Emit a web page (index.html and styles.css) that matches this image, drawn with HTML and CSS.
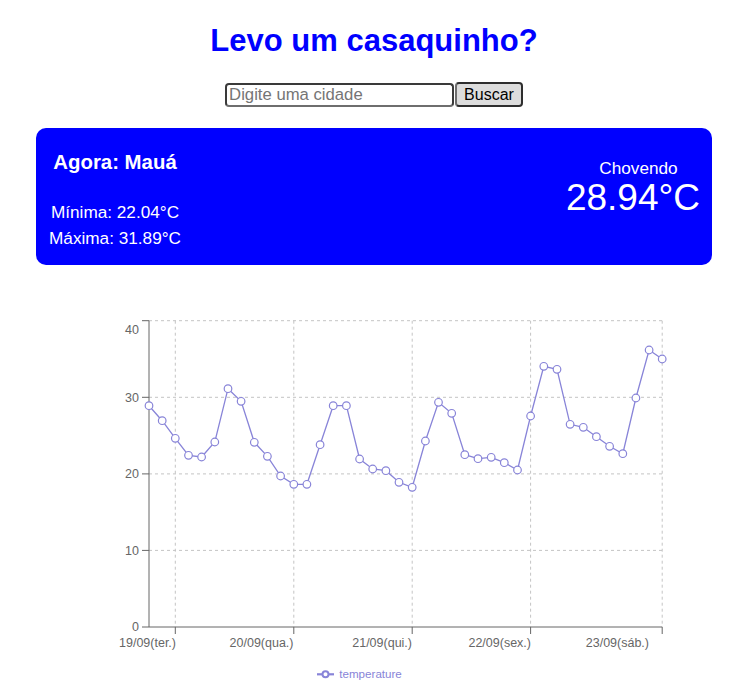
FILE: index.html
```html
<!DOCTYPE html>
<html lang="pt-BR">
<head>
<meta charset="utf-8">
<title>Levo um casaquinho?</title>
<link rel="stylesheet" href="styles.css">
</head>
<body>
<h1 class="title">Levo um casaquinho?</h1>
<form class="search">
  <input class="search-input" type="text" placeholder="Digite uma cidade"><button class="search-btn" type="button">Buscar</button>
</form>
<section class="card">
  <div class="card-left">
    <h3 class="city">Agora: Mauá</h3>
    <p class="minmax">Mínima: 22.04°C</p>
    <p class="minmax">Máxima: 31.89°C</p>
  </div>
  <div class="card-right">
    <p class="cond">Chovendo</p>
    <p class="temp">28.94°C</p>
  </div>
</section>
<svg class="chart" width="750" height="405" viewBox="0 290 750 405" xmlns="http://www.w3.org/2000/svg">
  <g class="grid" stroke="#c4c4c4" stroke-dasharray="3 3" fill="none">
    <line x1="149" y1="320.7" x2="662.2" y2="320.7"/>
    <line x1="149" y1="397.3" x2="662.2" y2="397.3"/>
    <line x1="149" y1="473.9" x2="662.2" y2="473.9"/>
    <line x1="149" y1="550.4" x2="662.2" y2="550.4"/>
    <line x1="175.3" y1="320.7" x2="175.3" y2="627"/>
    <line x1="293.8" y1="320.7" x2="293.8" y2="627"/>
    <line x1="412.2" y1="320.7" x2="412.2" y2="627"/>
    <line x1="530.6" y1="320.7" x2="530.6" y2="627"/>
    <line x1="662.2" y1="320.7" x2="662.2" y2="627"/>
  </g>
  <g class="axis" stroke="#666" fill="none">
    <line x1="149" y1="320.7" x2="149" y2="627"/>
    <line x1="149" y1="627" x2="662.2" y2="627"/>
    <line x1="142" y1="320.7" x2="149" y2="320.7"/>
    <line x1="142" y1="397.3" x2="149" y2="397.3"/>
    <line x1="142" y1="473.9" x2="149" y2="473.9"/>
    <line x1="142" y1="550.4" x2="149" y2="550.4"/>
    <line x1="142" y1="627" x2="149" y2="627"/>
    <line x1="175.3" y1="627" x2="175.3" y2="634"/>
    <line x1="293.8" y1="627" x2="293.8" y2="634"/>
    <line x1="412.2" y1="627" x2="412.2" y2="634"/>
    <line x1="530.6" y1="627" x2="530.6" y2="634"/>
    <line x1="662.2" y1="627" x2="662.2" y2="634"/>
  </g>
  <g class="ticks" text-anchor="end">
    <text x="139" y="334">40</text>
    <text x="139" y="401.7">30</text>
    <text x="139" y="478.3">20</text>
    <text x="139" y="554.8">10</text>
    <text x="139" y="631.4">0</text>
    <text x="176" y="646.5">19/09(ter.)</text>
    <text x="293.5" y="646.5">20/09(qua.)</text>
    <text x="412" y="646.5">21/09(qui.)</text>
    <text x="531" y="646.5">22/09(sex.)</text>
    <text x="649" y="646.5">23/09(sáb.)</text>
  </g>
  <polyline class="series" fill="none" stroke="#8884d8" stroke-width="1.3" points="149,405.7 162.2,420.7 175.3,438.3 188.5,455.3 201.6,457 214.8,442 228,388.7 241.1,401.3 254.3,442.3 267.4,456.3 280.6,476 293.8,484.3 306.9,484.3 320.1,444.7 333.2,405.7 346.4,405.7 359.6,459 372.7,469 385.9,470.7 399,482.3 412.2,487.3 425.4,441 438.5,402.3 451.7,413.3 464.8,454.7 478,458.7 491.2,457.3 504.3,462.7 517.5,470 530.6,416 543.8,366.3 557,369.3 570.1,424.3 583.3,427.3 596.4,436.7 609.6,446.3 622.8,453.7 635.9,398 649.1,350 662.2,359"/>
  <g class="dots" fill="#fff" stroke="#8884d8" stroke-width="1.2">
    <circle cx="149" cy="405.7" r="3.8"/>
    <circle cx="162.2" cy="420.7" r="3.8"/>
    <circle cx="175.3" cy="438.3" r="3.8"/>
    <circle cx="188.5" cy="455.3" r="3.8"/>
    <circle cx="201.6" cy="457" r="3.8"/>
    <circle cx="214.8" cy="442" r="3.8"/>
    <circle cx="228" cy="388.7" r="3.8"/>
    <circle cx="241.1" cy="401.3" r="3.8"/>
    <circle cx="254.3" cy="442.3" r="3.8"/>
    <circle cx="267.4" cy="456.3" r="3.8"/>
    <circle cx="280.6" cy="476" r="3.8"/>
    <circle cx="293.8" cy="484.3" r="3.8"/>
    <circle cx="306.9" cy="484.3" r="3.8"/>
    <circle cx="320.1" cy="444.7" r="3.8"/>
    <circle cx="333.2" cy="405.7" r="3.8"/>
    <circle cx="346.4" cy="405.7" r="3.8"/>
    <circle cx="359.6" cy="459" r="3.8"/>
    <circle cx="372.7" cy="469" r="3.8"/>
    <circle cx="385.9" cy="470.7" r="3.8"/>
    <circle cx="399" cy="482.3" r="3.8"/>
    <circle cx="412.2" cy="487.3" r="3.8"/>
    <circle cx="425.4" cy="441" r="3.8"/>
    <circle cx="438.5" cy="402.3" r="3.8"/>
    <circle cx="451.7" cy="413.3" r="3.8"/>
    <circle cx="464.8" cy="454.7" r="3.8"/>
    <circle cx="478" cy="458.7" r="3.8"/>
    <circle cx="491.2" cy="457.3" r="3.8"/>
    <circle cx="504.3" cy="462.7" r="3.8"/>
    <circle cx="517.5" cy="470" r="3.8"/>
    <circle cx="530.6" cy="416" r="3.8"/>
    <circle cx="543.8" cy="366.3" r="3.8"/>
    <circle cx="557" cy="369.3" r="3.8"/>
    <circle cx="570.1" cy="424.3" r="3.8"/>
    <circle cx="583.3" cy="427.3" r="3.8"/>
    <circle cx="596.4" cy="436.7" r="3.8"/>
    <circle cx="609.6" cy="446.3" r="3.8"/>
    <circle cx="622.8" cy="453.7" r="3.8"/>
    <circle cx="635.9" cy="398" r="3.8"/>
    <circle cx="649.1" cy="350" r="3.8"/>
    <circle cx="662.2" cy="359" r="3.8"/>
  </g>
  <g class="legend">
    <line x1="317" y1="674.3" x2="334" y2="674.3" stroke="#8884d8" stroke-width="2.2"/>
    <circle cx="325.5" cy="674.3" r="3" fill="#fff" stroke="#8884d8" stroke-width="2"/>
    <text class="legend-text" x="339.3" y="678">temperature</text>
  </g>
</svg>
</body>
</html>
```

FILE: styles.css
```css
html, body {
  margin: 0;
  padding: 0;
  background: #fff;
}

body {
  font-family: "Liberation Sans", Arial, sans-serif;
  width: 750px;
}

.title {
  margin: 23px 0 0;
  font-size: 31px;
  line-height: 36px;
  font-weight: bold;
  color: #0000ff;
  text-align: center;
  padding-right: 2px;
}

.search {
  margin: 23px 0 0;
  display: flex;
  justify-content: center;
  align-items: flex-start;
  padding-right: 2px;
}

.search-input {
  box-sizing: border-box;
  width: 229px;
  height: 24px;
  margin: 1px 0 0;
  padding: 0 2px;
  border: 2px solid #3a3a3a;
  border-bottom-color: #6e6e6e;
  border-radius: 4px;
  font-family: "Liberation Sans", Arial, sans-serif;
  font-size: 16.7px;
  color: #000;
  background: #fff;
  outline: none;
}

.search-input::placeholder {
  color: #757575;
}

.search-btn {
  box-sizing: border-box;
  height: 25px;
  margin: 0 0 0 1px;
  padding: 0 7px;
  border: 2px solid #2e2e2e;
  border-left-color: #6e6e6e;
  border-radius: 4px;
  background: #dddddd;
  font-family: "Liberation Sans", Arial, sans-serif;
  font-size: 16px;
  color: #000;
  line-height: 19px;
}

.card {
  box-sizing: border-box;
  width: 676px;
  height: 137px;
  margin: 21px 0 0 36px;
  padding: 0 12px 0 13px;
  background: #0000ff;
  border-radius: 10px;
  color: #fff;
  display: flex;
  justify-content: space-between;
  align-items: flex-start;
}

.card-left {
  display: flex;
  flex-direction: column;
  align-items: center;
  padding-top: 22px;
}

.city {
  margin: 0 0 26px;
  font-size: 20.4px;
  line-height: 24px;
  font-weight: bold;
}

.minmax {
  margin: 0;
  font-size: 17.2px;
  line-height: 25.7px;
}

.card-right {
  display: flex;
  flex-direction: column;
  align-items: center;
  padding-top: 29.8px;
}

.cond {
  margin: 0;
  padding-left: 11px;
  font-size: 17.2px;
  line-height: 20px;
}

.temp {
  margin: 0;
  font-size: 37px;
  line-height: 40px;
}

.chart {
  display: block;
  margin-top: 25px;
}

.ticks text {
  font-family: "Liberation Sans", Arial, sans-serif;
  font-size: 12.5px;
  fill: #666;
}

.legend-text {
  font-family: "Liberation Sans", Arial, sans-serif;
  font-size: 11.6px;
  fill: #8884d8;
}
```
